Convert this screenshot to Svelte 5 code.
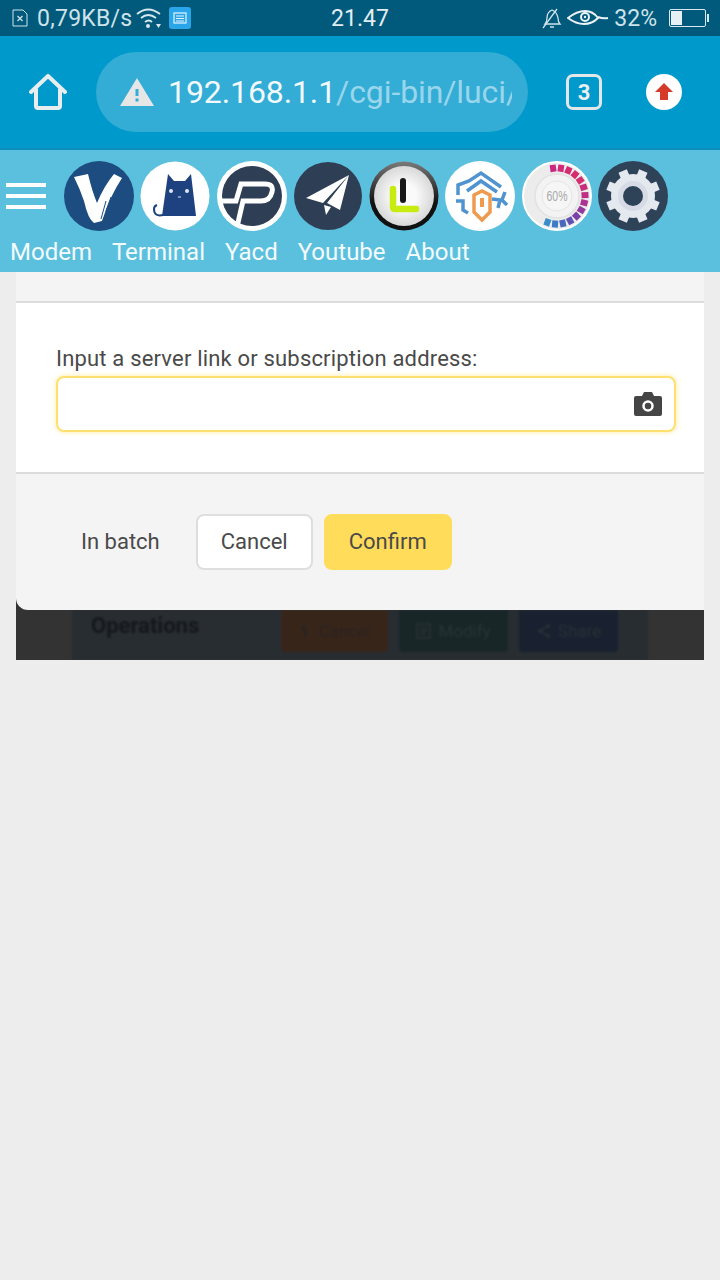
<script>
  const labels = ['Modem', 'Terminal', 'Yacd', 'Youtube', 'About'];
  // colour ring on the 60% gauge: [angle, colour]
  const ticks = [
    [-8, '#c9287f'], [8, '#d02a78'], [24, '#d42c70'], [40, '#d62c6c'], [56, '#d2306e'], [72, '#c82f78'],
    [88, '#bd3084'], [104, '#ac3390'], [120, '#93389c'], [136, '#7a42a8'], [152, '#5f52b4'], [168, '#4a68bc'], [184, '#3d7cc4'], [200, '#3a8ccc']
  ];
  const teeth = [0, 45, 90, 135, 180, 225, 270, 315];
</script>

<div class="status">
  <div class="status-left">
    <svg class="sim" viewBox="0 0 16 18" width="16" height="18"><path d="M1 1h10l4 4v12H1z" fill="none" stroke="#cfe3ea" stroke-width="1"/><path d="M5.5 7l5 5M10.500 7l-5 5" stroke="#cfe3ea" stroke-width="1.300"/></svg>
    <span>0,79KB/s</span>
    <svg viewBox="0 0 26 22" width="26" height="22"><g fill="none" stroke="#d8e8ee" stroke-width="1.800"><path d="M1 7q11-9 23 0"/><path d="M5 11q7-6 15 0"/><path d="M9 15q4-3 7 0"/></g><circle cx="12" cy="19" r="2" fill="#d8e8ee"/><path d="M20 17h5l-2.500 4z" fill="#d8e8ee"/></svg>
    <span class="news"><svg viewBox="0 0 22 22" width="22" height="22"><rect width="22" height="22" rx="3" fill="#2aa5ea"/><rect x="5" y="6" width="12" height="10" fill="none" stroke="#e8f5fd" stroke-width="1.200"/><path d="M7 9h8M7 11.500h8M7 14h8" stroke="#e8f5fd"/></svg></span>
  </div>
  <div class="clock">21.47</div>
  <div class="status-right">
    <svg viewBox="0 0 20 22" width="20" height="22"><path d="M3 17q2-2 2-6 0-6 5-8 5 2 6 8 0 4 2 6z" fill="none" stroke="#cfe3ea" stroke-width="1.300"/><path d="M8 20h4M1 21L15 2" stroke="#cfe3ea" stroke-width="1.300"/></svg>
    <svg viewBox="0 0 42 18" width="42" height="18"><path d="M1 9Q10 2 18 2q8 0 13 7-6 6-14 6Q9 15 1 9z" fill="none" stroke="#eaf3f6" stroke-width="2"/><path d="M31 8q5 2 10 1" fill="none" stroke="#eaf3f6" stroke-width="2"/><circle cx="18" cy="8" r="4" fill="none" stroke="#eaf3f6" stroke-width="2"/><circle cx="18" cy="8" r="1.200" fill="#eaf3f6"/></svg>
    <span>32%</span>
    <svg class="batt" viewBox="0 0 42 18" width="42" height="18"><rect x=".5" y=".5" width="36" height="17" rx="1.500" fill="none" stroke="#d8e8ee"/><rect x="2" y="2" width="11" height="14" fill="#e6f0f4"/><rect x="38" y="5" width="2" height="8" fill="#d8e8ee"/></svg>
  </div>
</div>

<div class="browser">
  <svg class="home" viewBox="0 0 38 36" width="38" height="36"><path d="M2 18L19 2l17 16M7 15v17a2 2 0 0 0 2 2h20a2 2 0 0 0 2-2V15" fill="none" stroke="#e8eef0" stroke-width="4" stroke-linejoin="round" stroke-linecap="round"/></svg>
  <div class="url">
    <svg viewBox="0 0 34 30" width="34" height="30"><path d="M17 1l17 28H0z" fill="#e6e6e6"/><rect x="15.500" y="12" width="3" height="7" fill="#33acd6"/><rect x="15.500" y="21.500" width="3" height="3" fill="#33acd6"/></svg>
    <div class="url-text"><b>192.168.1.1</b>/cgi-bin/luci/</div>
  </div>
  <div class="tabs">3</div>
  <div class="upload"><svg viewBox="0 0 20 20" width="20" height="20"><path d="M10 1l9 9h-5v8H6v-8H1z" fill="#d63a2b"/></svg></div>
</div>

<nav class="nav">
  <div class="icons">
    <div class="burger"><i></i><i></i><i></i></div>
    <svg viewBox="0 0 70 70" width="70" height="70"><circle cx="35" cy="35" r="35" fill="#1c4c80"/><path d="M10 16l14-3q4 17 9 29 7-17 17-29l8 4Q46 35 38 60l-8 2q-6-4-10-22-4-12-10-24z" fill="#fff"/><path d="M42 40l-5 18M47 36l-5 14" stroke="#1c4c80" stroke-width="1"/></svg>
    <svg viewBox="0 0 70 70" width="70" height="70"><circle cx="35" cy="35" r="34.500" fill="#fff"/><path d="M28 13l6 7h11l6-7 5 42H22z" fill="#1e4280"/><path d="M23 54q-9 2-9-6 0-3 3-4" fill="none" stroke="#1e4280" stroke-width="2"/><circle cx="31" cy="30" r="2" fill="#dfe6f0"/><circle cx="47" cy="30" r="2" fill="#dfe6f0"/><path d="M38 36h3" stroke="#dfe6f0"/></svg>
    <svg viewBox="0 0 70 70" width="70" height="70"><circle cx="35" cy="35" r="35" fill="#fff"/><circle cx="35" cy="35" r="30" fill="#2e3f55"/><path d="M5 40H19L24 23H48Q57 23 55 31Q53 40 44 40H26L20 66" fill="none" stroke="#fff" stroke-width="5"/></svg>
    <svg viewBox="0 0 70 70" width="70" height="70"><circle cx="35" cy="35" r="34" fill="#2e3f55"/><path d="M56 14L13 37l17 5zM56 14L34 42l13 7zM31 44l2 10 5-8z" fill="#fff"/></svg>
    <svg viewBox="0 0 70 70" width="70" height="70"><defs><radialGradient id="lg"><stop offset=".4" stop-color="#fafafa"/><stop offset="1" stop-color="#d8d8d8"/></radialGradient><linearGradient id="lr" x1="0" y1="0" x2="0" y2="1"><stop offset="0" stop-color="#7a7a7a"/><stop offset=".6" stop-color="#111"/></linearGradient></defs><circle cx="35" cy="35" r="34.500" fill="url(#lr)"/><circle cx="35" cy="35" r="30" fill="url(#lg)"/><path d="M24 28v18q0 2 2 2h21" fill="none" stroke="#c8ec10" stroke-width="6.500" stroke-linecap="round"/><path d="M34 20v19" stroke="#181818" stroke-width="6" stroke-linecap="round"/></svg>
    <svg viewBox="0 0 70 70" width="70" height="70"><circle cx="35" cy="35" r="35" fill="#fff"/><g fill="none" stroke="#4f94cf" stroke-width="3.500"><path d="M13 34V24l11-4 12-8 20 14"/><path d="M22 30l14-10 16 11"/><path d="M11 40h7v9l5 3M60 31l-3 8 5 5M47 38l8 1-2 8"/></g><path d="M29 34l8-4 8 4v17l-8 8-8-8z" fill="none" stroke="#ef9a4e" stroke-width="3.500"/><path d="M35 37h4v9h-4z" fill="#ef9a4e"/></svg>
    <svg viewBox="0 0 70 70" width="70" height="70"><circle cx="35" cy="35" r="34" fill="#ececec" stroke="#fff" stroke-width="2"/><circle cx="35" cy="35" r="22" fill="#f3f3f3" stroke="#e2e2e2" stroke-width="1.500"/><circle cx="35" cy="35" r="15" fill="#f6f6f6" stroke="#e6e6e6"/>{#each ticks as [a, c]}<path d="M35 3.500v7" stroke={c} transform="rotate({a} 35 35)" stroke-width="6"/>{/each}<text x="35" y="40" text-anchor="middle" class="pct" textLength="21" lengthAdjust="spacingAndGlyphs">60%</text></svg>
    <svg viewBox="0 0 70 70" width="70" height="70"><circle cx="35" cy="35" r="35" fill="#2e4358"/><circle cx="35" cy="35" r="22" fill="#e4e8ef"/>{#each teeth as a}<path d="M35 8v10" stroke="#e4e8ef" stroke-width="9" transform="rotate({a + 22.5} 35 35)"/>{/each}<circle cx="35" cy="35" r="15" fill="#d6dbe5"/><circle cx="35" cy="35" r="10" fill="#2e4358"/></svg>
  </div>
  <div class="links">
    {#each labels as label}<span>{label}</span>{/each}
  </div>
</nav>

<main class="page">
  <div class="backdrop">
    <div class="modal">
      <div class="modal-head"></div>
      <div class="modal-body">
        <label for="link">Input a server link or subscription address:</label>
        <div class="field">
          <input id="link" type="text" />
          <svg viewBox="0 0 28 24" width="28" height="24"><path d="M2 4h6l2-4h8l2 4h6a2 2 0 0 1 2 2v16a2 2 0 0 1-2 2H2a2 2 0 0 1-2-2V6a2 2 0 0 1 2-2z" fill="#454545"/><circle cx="14" cy="14" r="4.500" fill="none" stroke="#fff" stroke-width="2.500"/></svg>
        </div>
      </div>
      <div class="modal-foot">
        <button class="plain">In batch</button>
        <button class="outline">Cancel</button>
        <button class="primary">Confirm</button>
      </div>
    </div>
    <div class="under">
      <div class="under-panel">
        <strong>Operations</strong>
        <div class="under-actions">
          <span class="act orange">
            <svg viewBox="0 0 14 18" width="14" height="18"><path d="M4 4l3 10" stroke="#2a2320" stroke-width="3"/></svg>Cancel
          </span>
          <span class="act green">
            <svg viewBox="0 0 16 18" width="16" height="18"><path d="M1 2h13v14H1zM4 6h7M4 9h7M4 12h5" fill="none" stroke="#2a3336" stroke-width="1.500"/></svg>Modify
          </span>
          <span class="act navy">
            <svg viewBox="0 0 16 16" width="16" height="16"><path d="M12 3L4 8l8 5" fill="none" stroke="#2a3038" stroke-width="1.500"/><circle cx="12" cy="3" r="2" fill="#2a3038"/><circle cx="4" cy="8" r="2" fill="#2a3038"/><circle cx="12" cy="13" r="2" fill="#2a3038"/></svg>Share
          </span>
        </div>
      </div>
    </div>
  </div>
</main>

<style>
  :global(body) {
    background: #ededed;
    font-family: Roboto, "Liberation Sans", sans-serif;
    min-height: 1280px;
  }

  .status {
    height: 36px;
    background: #015a7c;
    color: #cfe3ea;
    font-size: 23px;
    display: grid;
    grid-template-columns: 1fr auto 1fr;
    align-items: center;
    padding: 0 12px;
    box-sizing: border-box;
  }

  .status-left,
  .status-right {
    display: flex;
    align-items: center;
  }

  .status-left span:nth-of-type(1) {
    margin: 0 4px 0 9px;
    letter-spacing: 0.25px;
  }

  .news {
    display: flex;
    margin-left: 7px;
  }

  .status-right {
    justify-content: flex-end;
    gap: 5px;
  }

  .status-right .batt {
    margin-left: 7px;
    margin-right: -3px;
  }

  .clock {
    color: #e2eef2;
    font-size: 23px;
  }

  .browser {
    height: 114px;
    box-sizing: border-box;
    background: #0099cc;
    border-bottom: 2px solid #0a90bd;
    display: flex;
    align-items: center;
    padding-left: 29px;
  }

  .url {
    width: 432px;
    height: 80px;
    margin-left: 29px;
    border-radius: 40px;
    background: #33acd6;
    display: flex;
    align-items: center;
    padding: 0 16px 0 24px;
    box-sizing: border-box;
    gap: 14px;
  }

  .url svg {
    flex: none;
  }

  .url-text {
    font-size: 32px;
    letter-spacing: -0.1px;
    color: #99d6eb;
    white-space: nowrap;
    overflow: hidden;
  }

  .url-text b {
    font-weight: 400;
    color: #f2fafd;
  }

  .tabs {
    width: 36px;
    height: 36px;
    box-sizing: border-box;
    border: 3px solid #e2e8ea;
    border-radius: 7px;
    margin-left: 38px;
    color: #e8f0f3;
    font-size: 22px;
    font-weight: 700;
    display: flex;
    align-items: center;
    justify-content: center;
  }

  .upload {
    width: 36px;
    height: 36px;
    border-radius: 50%;
    background: #fff;
    margin-left: 44px;
    display: flex;
    align-items: center;
    justify-content: center;
  }

  .nav {
    height: 122px;
    background: #5bc0de;
    box-sizing: border-box;
    padding-top: 11px;
  }

  .icons {
    display: flex;
    align-items: center;
    gap: 6.300px;
    padding-left: 6px;
    height: 70px;
  }

  .burger {
    width: 40px;
    margin-right: 11.700px;
    display: flex;
    flex-direction: column;
    gap: 7px;
  }

  .burger i {
    display: block;
    height: 4px;
    background: #fff;
  }

  .pct {
    font-family: "Liberation Sans", sans-serif;
    font-size: 14px;
    fill: #a8a8a8;
  }

  .links {
    display: flex;
    gap: 20px;
    padding: 6px 0 0 10px;
    font-size: 24px;
    line-height: 30px;
    color: #f4fbfd;
  }

  .page {
    padding: 0 16px;
  }

  .backdrop {
    background: #333;
  }

  .modal {
    background: #f4f4f4;
    border-radius: 0 0 0 12px;
    overflow: hidden;
  }

  .modal-head {
    height: 29px;
    border-bottom: 2px solid #dcdcdc;
  }

  .modal-body {
    background: #fff;
    box-sizing: border-box;
    padding: 43px 28px 0 40px;
    border-bottom: 2px solid #dcdcdc;
    height: 171px;
  }

  label {
    display: block;
    font-size: 22px;
    letter-spacing: 0.18px;
    line-height: 26px;
    color: #4a4a4a;
    margin-bottom: 4px;
  }

  .field {
    height: 56px;
    box-sizing: border-box;
    border: 2px solid #ffdf6e;
    border-radius: 8px;
    box-shadow: 0 0 4px 1px #fff0b8;
    display: flex;
    align-items: center;
    padding-right: 12px;
  }

  input {
    flex: 1;
    min-width: 0;
    border: 0;
    outline: 0;
    background: none;
  }

  .modal-foot {
    height: 136px;
    box-sizing: border-box;
    display: flex;
    align-items: center;
    padding-left: 40px;
    gap: 11px;
  }

  button {
    height: 56px;
    font: inherit;
    font-size: 22px;
    line-height: 24px;
    color: #4a4a4a;
    border-radius: 8px;
    border: 2px solid transparent;
    padding: 0 23px 1px;
    background: none;
  }

  .outline {
    background: #fff;
    border-color: #dedede;
  }

  .primary {
    background: #ffdc5a;
    border-color: #ffdc5a;
  }

  .under {
    height: 50px;
    padding: 0 56px;
    overflow: hidden;
  }

  .under-panel {
    height: 50px;
    background: #282d31;
    display: flex;
    padding: 0 30px 0 19px;
    justify-content: space-between;
    filter: blur(1px);
  }

  .under-panel strong {
    font-size: 22px;
    color: #14181c;
    line-height: 32px;
  }

  .under-actions {
    display: flex;
    gap: 11px;
    height: 42px;
  }

  .act {
    display: flex;
    align-items: center;
    justify-content: center;
    gap: 6px;
    font-size: 17px;
    border-radius: 0 0 4px 4px;
    box-sizing: border-box;
  }

  .orange {
    width: 107px;
    background: #38251a;
    color: #2a2320;
  }

  .green {
    width: 109px;
    background: #182628;
    color: #2a3336;
  }

  .navy {
    width: 99px;
    background: #192130;
    color: #2a3038;
  }
</style>
